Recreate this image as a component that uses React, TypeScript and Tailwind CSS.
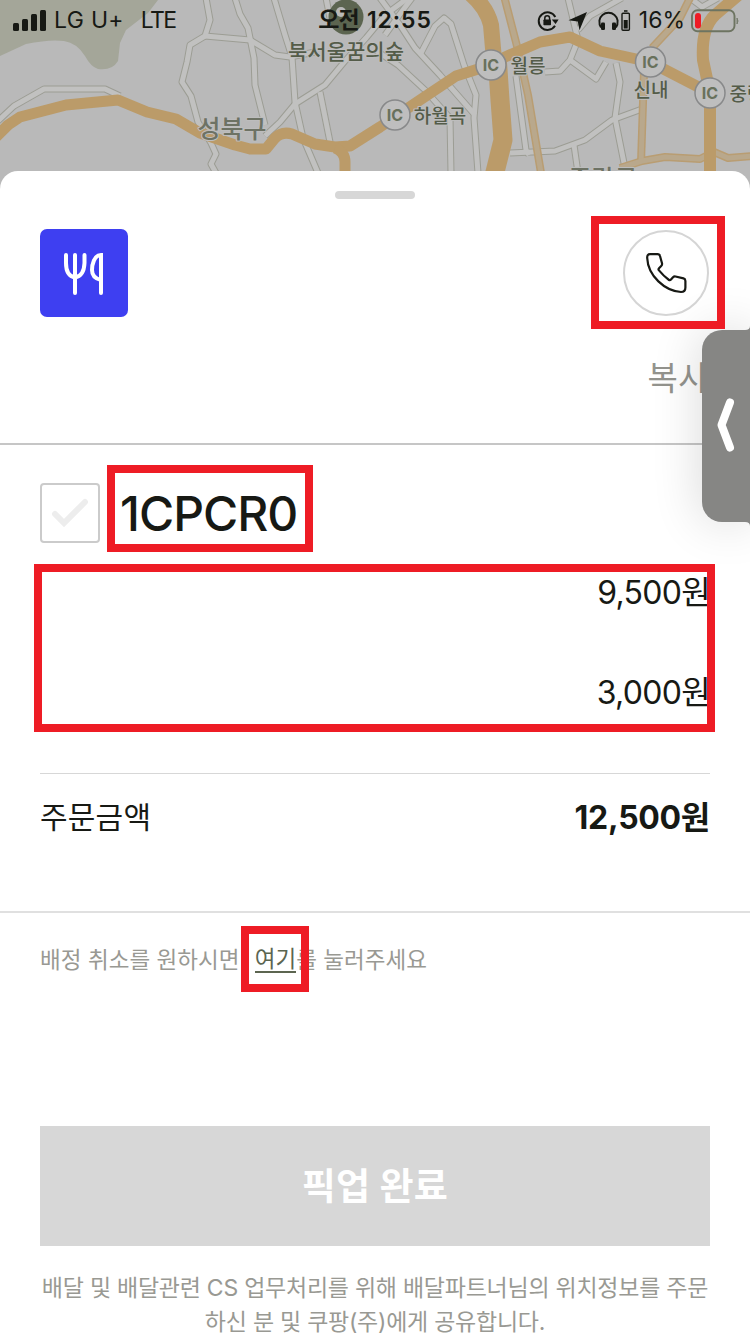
import type { ReactNode } from "react";

// side streets, drawn as an outlined light line
const streets = [
  "M-2 121 L14 106 L44 89 L105 89 L120 96",
  "M206 -2 L210 20 L205 36 L190 45 L187 62 L182 82 L191 96 L198 122 L211 143 L216 154 L211 164 L216 173",
  "M205 36 L250 40 L275 55 L290 57 L315 52",
  "M235 -2 L240 14 L248 28 L254 58 L255 85 L265 125",
  "M274 -2 L285 35 L292 57 L295 102 L303 138 L318 173",
  "M326 -2 L330 18",
  "M265 136 L280 122 L295 104 L325 85 L345 61 L366 38 L385 15 L408 -2",
  "M320 92 L330 142",
  "M380 -2 L400 25 L415 48 L440 75 L475 115",
  "M375 50 L398 65 L425 90 L450 118 L451 173",
  "M421 53 L435 26 L444 18 L451 24 L464 65 L476 95 L474 118 L478 173",
  "M385 35 L400 14 L412 -2",
  "M516 76 L526 150 L529 155",
  "M510 153 L555 151 L585 140 L612 120 L642 109",
  "M574 145 L578 173",
  "M616 63 L620 82 L615 118 L625 168",
  "M568 -2 L578 40 L570 60 L560 71 L545 72",
  "M570 60 L596 79 L606 62",
  "M578 30 L590 16 L622 -2",
  "M690 -2 L702 7 L718 -2",
];

const minorRoads = [
  "M504 -4 L518 50 L528 95 L541 173",
  "M691 -4 L680 18 L652 48",
  "M644 72 L641 163",
  "M620 168 L642 161 L665 157 L700 159 L714 152 L728 158 L752 156",
];

const interchanges = [
  { x: 395, y: 115 },
  { x: 491, y: 65 },
  { x: 650.5, y: 62 },
  { x: 710, y: 93 },
];

const mapLabels = [
  { x: 346, y: 59, size: 21, text: "북서울꿈의숲", color: "#545c49" },
  { x: 440, y: 123, size: 19, text: "하월곡", color: "#545c49" },
  { x: 528, y: 73, size: 19, text: "월릉", color: "#545c49" },
  { x: 651, y: 97, size: 19, text: "신내", color: "#545c49" },
  { x: 747, y: 101, size: 19, text: "중랑", color: "#545c49" },
  { x: 232, y: 138, size: 25, text: "성북구", color: "#6d7264" },
  { x: 603, y: 188, size: 25, text: "중랑구", color: "#6d7264" },
];

function MapBackdrop() {
  return (
    <svg
      viewBox="0 0 750 200"
      className="absolute inset-0 h-[200px] w-[750px]"
      fill="none"
      strokeLinejoin="round"
    >
      <rect width="750" height="200" fill="#b9b9b9" />
      <path
        d="M0 0 H158 L148 13 L126 30 L120 43 L118 61 Q112 71 98 69 Q91 67 85 56 Q77 43 64 41 Q50 39 26 44 L0 56Z"
        fill="#a4a699"
      />

      {streets.map((d) => (
        <path key={d} d={d} stroke="#9c9d94" strokeWidth="7" />
      ))}
      {streets.map((d) => (
        <path key={d} d={d} stroke="#c1c1c0" strokeWidth="5" />
      ))}
      {minorRoads.map((d) => (
        <path key={d} d={d} stroke="#b99d72" strokeWidth="8" />
      ))}
      {minorRoads.map((d) => (
        <path key={d} d={d} stroke="#b9a88c" strokeWidth="5" />
      ))}

      <g stroke="#bb9b69">
        <path
          d="M-4 137 L8 125 L20 117 L66 105 L118 100 L147 112 L176 119 L200 133 L235 145 L250 149 L266 149 L275 138 Q282 131 292 134 L315 144 L335 147 L350 146 L380 127 L420 100 L456 76 L491 65 L505 57 L540 42 L570 37 L600 51 L650 62 L710 93"
          strokeWidth="11"
        />
        <path d="M335 148 Q345 152 345 162 V175" strokeWidth="11" />
        <path d="M471 -6 Q487 8 491 25 L494 60" strokeWidth="16" />
        <path d="M497 55 L500 100 L503 140 L494 176" strokeWidth="19" />
        <path d="M742 -8 L715 15 Q701 28 703 60 L710 93 V175" strokeWidth="12" />
      </g>

      <circle cx="346" cy="17" r="17.5" fill="#5c6550" />
      <circle cx="341" cy="12" r="5" fill="#b9b9b9" />

      {interchanges.map((ic) => (
        <g key={ic.x}>
          <circle cx={ic.x} cy={ic.y} r="15" fill="#bebebe" stroke="#88898a" strokeWidth="1.5" />
          <text
            x={ic.x}
            y={ic.y + 6}
            textAnchor="middle"
            fill="#68715c"
            className="font-['Inter','Liberation_Sans',sans-serif] text-[16px] font-bold"
          >
            IC
          </text>
        </g>
      ))}

      {mapLabels.map((l) => (
        <text
          key={l.text}
          x={l.x}
          y={l.y}
          fontSize={l.size}
          textAnchor="middle"
          fill={l.color}
          stroke="#bdbdbd"
          strokeWidth="2"
          paintOrder="stroke"
          className="font-['Noto_Sans_CJK_KR',sans-serif] font-medium"
        >
          {l.text}
        </text>
      ))}
    </svg>
  );
}

function StatusBar() {
  return (
    <div className="relative flex h-[41px] items-center justify-between pr-[11px] pl-[13px] text-[23px] text-[#171914]">
      <div className="flex items-center">
        <svg width="34" height="22" viewBox="0 0 34 22" fill="#171914">
          <rect x="0" y="13" width="6" height="8" rx="1.5" />
          <rect x="9" y="9" width="6" height="12" rx="1.5" />
          <rect x="18" y="4" width="6" height="17" rx="1.5" />
          <rect x="27" y="0" width="6" height="21" rx="1.5" />
        </svg>
        <span className="ml-[7px] tracking-[0.3px]">LG U+</span>
        <span className="ml-[17px] tracking-[-1.6px]">LTE</span>
      </div>

      <div className="absolute inset-x-0 flex justify-center font-semibold">
        <span className="tracking-[-0.8px]">오전</span>
        <span className="ml-2 tracking-[0.9px]">12:55</span>
      </div>

      <div className="flex items-center">
        {/* rotation lock */}
        <svg width="22" height="22" viewBox="0 0 22 22" fill="none" stroke="#171914" strokeWidth="2">
          <path d="M18 15.8 A8.8 8.8 0 1 1 18.3 7" />
          <path d="M14.8 9.5 H21.6 L18.6 14Z" fill="#171914" stroke="none" />
          <path d="M7.8 10 V8.2 a2.4 2.4 0 0 1 4.8 0 V10" strokeWidth="1.5" />
          <rect x="6.4" y="9.4" width="7.6" height="5.8" rx="0.8" fill="#171914" stroke="none" />
        </svg>
        <svg className="ml-[9px]" width="20" height="20" viewBox="0 0 20 20" fill="#171914">
          <path d="M19 1 L11.5 19.3 L9.8 10.6 L0.5 9.2Z" />
        </svg>
        <svg className="ml-[10px]" width="22" height="20" viewBox="0 0 22 20" fill="none" stroke="#171914">
          <path d="M3 16.5 Q1 13.5 1.4 9.5 A9.2 9 0 0 1 19.6 9.5 Q20 13.5 18 16.5" strokeWidth="1.9" />
          <rect x="3" y="11.5" width="4" height="7.5" rx="1.2" fill="#171914" stroke="none" />
          <rect x="14" y="11.5" width="4" height="7.5" rx="1.2" fill="#171914" stroke="none" />
        </svg>
        <svg className="ml-px" width="10" height="21" viewBox="0 0 10 21" fill="none" stroke="#171914">
          <path d="M3 1 H6.5" strokeWidth="1.6" />
          <rect x="1" y="3.2" width="7.4" height="17" rx="1" strokeWidth="1.4" />
          <rect x="2.7" y="10" width="4" height="8.5" fill="#171914" stroke="none" />
        </svg>
        <span className="ml-[8px]">16%</span>
        <svg className="ml-[6px]" width="48" height="24" viewBox="0 0 48 24" fill="none">
          <rect x="1" y="1.2" width="42.5" height="21" rx="5.5" stroke="#6d7461" strokeWidth="1.9" />
          <rect x="4" y="4" width="6" height="15.5" rx="3" fill="#ee1c25" />
          <path d="M46 9 Q48 12 46 15Z" fill="#777d6e" stroke="#777d6e" />
        </svg>
      </div>
    </div>
  );
}

function StoreIcon() {
  return (
    <div className="flex size-[88px] items-center justify-center rounded-[7px] bg-[#3e3ff1]">
      <svg width="88" height="88" viewBox="0 0 88 88" fill="none" stroke="#fff" strokeWidth="4" strokeLinecap="round">
        <path d="M26 26 V34 Q26 47 35 48.5 Q44 47 44.5 34 V26" />
        <path d="M35 26 V64" />
        <path d="M61 64 V26 C54 26 52 36 52 41 Q52 49 61 51" />
      </svg>
    </div>
  );
}

function CallButton() {
  return (
    <button className="mr-px flex size-[86px] items-center justify-center rounded-full border-2 border-[#d5d5d5]">
      <svg width="42" height="42" viewBox="645 252 42 42" fill="none" stroke="#171914" strokeWidth="2.2" strokeLinejoin="round">
        <path d="M650 254.2 H657.5 Q659.6 254.2 660 256 L662 263.3 Q662.4 264.8 661.2 266 L659 268.2 Q658 269.2 659 270.4 Q663.5 276 669 280 Q670 280.6 671 279.5 L673 277.2 Q674 276.2 675.5 276.5 L683.5 278.4 Q685.4 279 685.4 281 V287.5 Q685.4 292 681 292 C665 291 648 276 647.2 258 Q647 254.2 650 254.2Z" />
      </svg>
    </button>
  );
}

function PriceRow({ children }: { children: ReactNode }) {
  return (
    <div className="flex h-[50px] items-center justify-end pt-0.5 text-[32px] tracking-[-0.7px]">
      {children}
    </div>
  );
}

function SideTab() {
  return (
    <div className="absolute top-[330px] right-0 flex h-[192px] w-12 items-center rounded-l-[20px] bg-[#868684] shadow-[0_0_50px_rgba(0,0,0,0.16)]">
      <svg className="mb-0.5 ml-[14px]" width="20" height="56" viewBox="0 0 20 56" fill="none" stroke="#fff" strokeWidth="8" strokeLinecap="round" strokeLinejoin="round">
        <path d="M14 5.5 L5.5 28 L14 50.5" />
      </svg>
      <svg className="absolute -top-1 right-0" width="5" height="4" fill="#868684">
        <path d="M0 4 Q5 4 5 0 V4Z" />
      </svg>
      <svg className="absolute right-0 -bottom-1" width="5" height="4" fill="#868684">
        <path d="M0 0 Q5 0 5 4 V0Z" />
      </svg>
    </div>
  );
}

export default function App() {
  return (
    <div className="relative h-[1334px] w-[750px] overflow-hidden bg-white font-['Inter','Noto_Sans_CJK_KR',sans-serif] text-[#171914]">
      <header className="relative h-[171px]">
        <MapBackdrop />
        <StatusBar />
      </header>

      <main className="relative flex h-[1163px] flex-col rounded-t-[18px] bg-white">
        <div className="mx-auto mt-5 h-2 w-20 shrink-0 rounded-full bg-[#d7d7d7]" />

        {/* STORE */}
        <section className="h-[246px] shrink-0 border-b-2 border-[#c6c6c6] px-10 pt-[30px]">
          <div className="flex items-center justify-between">
            <StoreIcon />
            <CallButton />
          </div>
          <div className="mt-9 mr-px flex justify-end text-[33px] leading-[50px] tracking-[0.4px] text-[#93938d]">
            복사
          </div>
        </section>

        {/* ORDER */}
        <section className="h-[468px] shrink-0 border-b-2 border-[#e0e0e0] px-10 pt-[38px]">
          <div className="flex h-[60px] items-center">
            <div className="flex size-[60px] items-center justify-center rounded-[4px] border-2 border-[#cbcbcb]">
              <svg width="38" height="30" viewBox="0 0 38 30" fill="none" stroke="#ededed" strokeWidth="6" strokeLinecap="round">
                <path d="M4 16 L13 25 L34 4" />
              </svg>
            </div>
            <span className="ml-5 pt-0.5 text-[48px] font-medium tracking-[-1px]">1CPCR0</span>
          </div>

          <div className="mt-6 mb-14 flex flex-col gap-[50px]">
            <PriceRow>9,500원</PriceRow>
            <PriceRow>3,000원</PriceRow>
          </div>

          <div className="flex h-[88px] items-center justify-between border-t border-[#d7d7d7]">
            <span className="text-[30px] tracking-[0.2px]">주문금액</span>
            <span className="text-[32px] font-bold tracking-[-0.3px]">12,500원</span>
          </div>
        </section>

        <p className="mt-[30px] flex h-[34px] shrink-0 items-center px-10 text-[22.5px] tracking-[0.06px] text-[#999993]">
          <span>배정 취소를 원하시면</span>
          <button className="ml-[15px] border-b-2 border-[#5c6550] leading-[24px] text-[#5c6550]">여기</button>
          <span>를 눌러주세요</span>
        </p>

        <button className="mx-10 mt-[149px] h-[120px] shrink-0 bg-[#d7d7d7] pt-0.5 text-[37px] font-bold tracking-[0.3px] text-white">
          픽업 완료
        </button>
        <p className="mt-[25px] text-center text-[23px] leading-[34px] tracking-[-0.25px] text-[#999993]">
          배달 및 배달관련 CS 업무처리를 위해 배달파트너님의 위치정보를 주문
          <br />
          하신 분 및 쿠팡(주)에게 공유합니다.
        </p>
      </main>

      <SideTab />

      {/* HIGHLIGHTS */}
      <div className="absolute top-[216px] left-[591px] h-[113px] w-[134px] border-8 border-[#ee1c25]" />
      <div className="absolute top-[465px] left-[107px] h-[87px] w-[206px] border-8 border-[#ee1c25]" />
      <div className="absolute top-[564px] left-[34px] h-[168px] w-[681px] border-8 border-[#ee1c25]" />
      <div className="absolute top-[926px] left-[241px] h-[66px] w-[68px] border-8 border-[#ee1c25]" />
    </div>
  );
}
